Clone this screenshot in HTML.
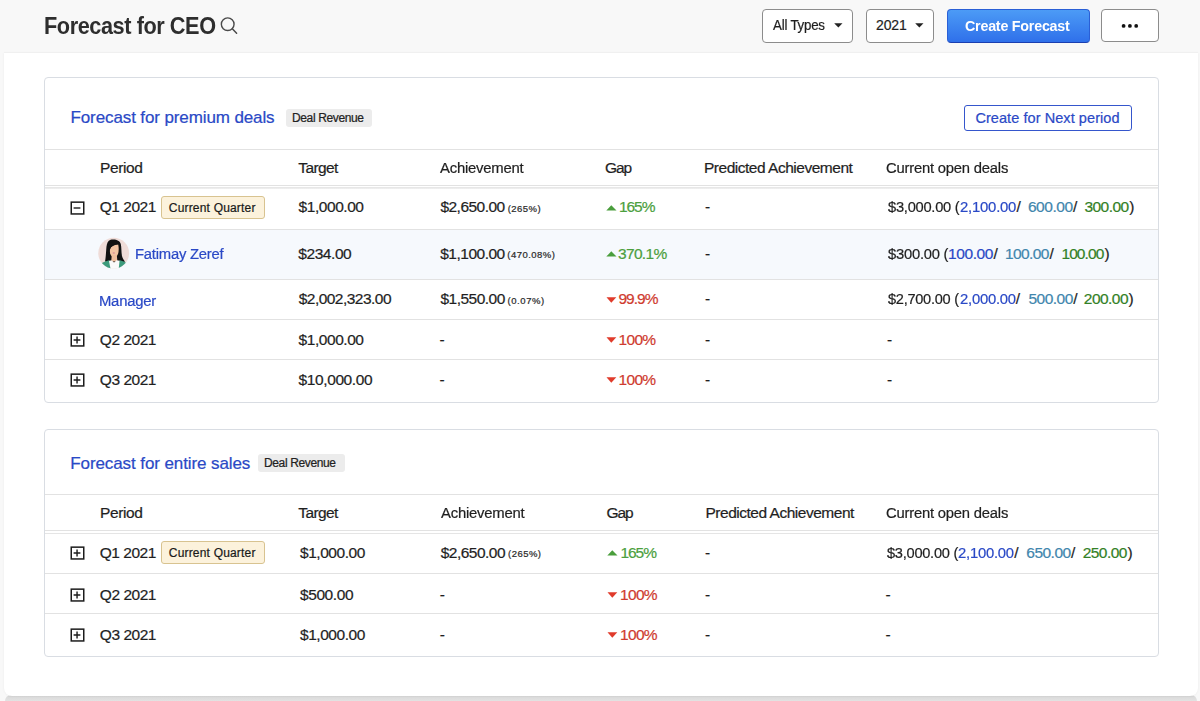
<!DOCTYPE html>
<html><head><meta charset="utf-8">
<style>
html,body{margin:0;padding:0;}
body{width:1200px;height:701px;overflow:hidden;position:relative;background:#f8f8f8;font-family:"Liberation Sans",sans-serif;}
.t{position:absolute;white-space:pre;font-family:"Liberation Sans",sans-serif;}
.panel{position:absolute;left:4px;top:53px;width:1194px;height:643px;background:#fff;border-radius:0 0 8px 8px;box-shadow:0 0 3px rgba(0,0,0,0.05);}
.band{position:absolute;left:5px;top:695px;width:1192px;height:6px;background:linear-gradient(#d0d0d0,#dcdcdc 40%,#e2e2e2);filter:blur(0.6px);border-radius:6px 6px 0 0;}
.card{position:absolute;left:44px;width:1113px;background:#fff;border:1px solid #d9dde3;border-radius:4px;}
.hl{position:absolute;left:45px;width:1113px;height:1px;background:#e2e2e2;}
.box{position:absolute;box-sizing:border-box;border:1px solid #8c8c8c;border-radius:4px;background:#fff;}
</style></head><body>
<div class="band"></div>
<div class="panel"></div>
<div style="position:absolute;left:4px;top:52px;width:1194px;height:1px;background:#f0f0f0"></div>
<svg style="position:absolute;left:218px;top:14px" width="22" height="22" viewBox="0 0 22 22"><circle cx="9.7" cy="10.2" r="6.35" stroke="#4a4a4a" stroke-width="1.4" fill="none"/><path d="M14.3 14.8 L18.6 19.2" stroke="#4a4a4a" stroke-width="1.5" stroke-linecap="round"/></svg>
<div class="box" style="left:762px;top:9px;width:91px;height:33.5px;"></div>
<svg style="position:absolute;left:833.5px;top:22.5px" width="9" height="5"><path d="M0.2 0.2 L8.5 0.2 L4.35 4.6Z" fill="#222"/></svg>
<div class="box" style="left:866px;top:9px;width:67.5px;height:33.5px;"></div>
<svg style="position:absolute;left:914.5px;top:22.5px" width="9" height="5"><path d="M0.2 0.2 L8.5 0.2 L4.35 4.6Z" fill="#222"/></svg>
<div style="position:absolute;left:946.5px;top:9px;width:143px;height:33.5px;box-sizing:border-box;border-radius:4px;background:linear-gradient(#4c9bf6,#2f70ea);border:1px solid #2a5fd6;border-bottom-color:#1a3fb0;"></div>
<div class="box" style="left:1101px;top:9px;width:57.5px;height:33px;"></div>
<svg style="position:absolute;left:1120px;top:22px" width="20" height="8"><circle cx="3.6" cy="3.9" r="1.9" fill="#111"/><circle cx="9.9" cy="3.9" r="1.9" fill="#111"/><circle cx="16.2" cy="3.9" r="1.9" fill="#111"/></svg>

<div class="card" style="top:76.5px;height:324.5px;"></div>
<div style="position:absolute;left:285.5px;top:108.5px;width:86px;height:18px;background:#ececec;border-radius:3px;"></div>
<div style="position:absolute;left:963.5px;top:104.5px;width:168px;height:26px;box-sizing:border-box;border:1px solid #3556cc;border-radius:3px;"></div>
<div class="hl" style="top:149px"></div>
<div class="hl" style="top:185px"></div>
<div class="hl" style="top:187px;height:2px;background:linear-gradient(#e4e4e4,#f1f1f1)"></div>
<div style="position:absolute;left:45px;top:230px;width:1113px;height:49px;background:#f6f9fd;"></div>
<div class="hl" style="top:229px"></div>
<div class="hl" style="top:279px"></div>
<div class="hl" style="top:319px"></div>
<div class="hl" style="top:359px"></div>
<div style="position:absolute;left:161px;top:196px;width:103.5px;height:22.5px;box-sizing:border-box;background:#fcf2dc;border:1px solid #d8c390;border-radius:3px;"></div>
<svg style="position:absolute;left:96px;top:235px" width="36" height="36" viewBox="0 0 36 36">
<defs><clipPath id="ac"><circle cx="17.7" cy="18.2" r="15.4"/></clipPath></defs>
<circle cx="17.7" cy="18.2" r="15.4" fill="#efdcd8"/>
<g clip-path="url(#ac)">
<path d="M16.8 4.5 C20.5 4.3 24 5.8 24.8 9 C25.6 12.5 25.2 17 26 21 C26.6 23.5 28 25 29 26.8 L22 27.5 L13 27.5 L9 26.6 C9.6 24 9.8 20 10.2 15 C10.5 10.5 11 7.2 12.8 5.8 C14 4.9 15.3 4.55 16.8 4.5Z" fill="#121212"/>
<path d="M14.6 12.5 C16 11 19.2 9.6 22.2 9.4 C22.9 12.5 22.9 16.5 22 19 C21 21.2 19.6 22.2 17.9 22.2 C16.1 22.2 14.6 20.6 14.1 18.2 C13.7 16.2 13.9 14 14.6 12.5Z" fill="#f2c4a2"/>
<path d="M12.5 8.5 C15.5 6.6 20 6.2 23.2 8.4 C22.8 9 21 9.3 19.5 9.6 C17 10.2 15 11.8 13.9 14.5Z" fill="#121212"/>
<path d="M15.8 20 L20.8 20 L21.4 26.5 L15.2 26.5Z" fill="#efbe9d"/>
<path d="M12.8 25.8 C14.5 25.5 15.5 25.3 16 25.5 L18 27.8 L20.5 25.3 C21.5 25.3 23 25.5 24.2 25.8 L24 36 L13 36Z" fill="#fafafa"/>
<path d="M2.5 36 L4.5 28.7 C7 27.2 10 26 12.8 25.2 L15 36Z" fill="#3c9b7c"/>
<path d="M23.6 25.2 C26 25.8 29 27 31.5 28.7 L33 36 L22.5 36Z" fill="#3c9b7c"/>
<ellipse cx="17.8" cy="18" rx="1.2" ry="0.65" fill="#d98f95"/>
</g></svg>

<div class="card" style="top:429px;height:226px;"></div>
<div style="position:absolute;left:257.5px;top:453.5px;width:87px;height:18px;background:#ececec;border-radius:3px;"></div>
<div class="hl" style="top:494px"></div>
<div class="hl" style="top:530px"></div>
<div class="hl" style="top:533px;background:#e5e5e5"></div>
<div class="hl" style="top:573px"></div>
<div class="hl" style="top:613px"></div>
<div style="position:absolute;left:161px;top:541px;width:103.5px;height:22.5px;box-sizing:border-box;background:#fcf2dc;border:1px solid #d8c390;border-radius:3px;"></div>

<!-- expand icons -->
<svg style="position:absolute;left:69.5px;top:200.5px" width="15" height="14"><rect x="1.25" y="1.15" width="12.5" height="11.8" fill="none" stroke="#1c1c1c" stroke-width="1.5"/><path d="M3.6 7 L10.4 7" stroke="#1c1c1c" stroke-width="1.4"/></svg>
<svg style="position:absolute;left:69.5px;top:333px" width="15" height="14"><rect x="1.25" y="1.15" width="12.5" height="11.8" fill="none" stroke="#1c1c1c" stroke-width="1.5"/><path d="M3.6 7 L10.4 7 M7.05 3.6 L7.05 10.4" stroke="#1c1c1c" stroke-width="1.4"/></svg>
<svg style="position:absolute;left:69.5px;top:373px" width="15" height="14"><rect x="1.25" y="1.15" width="12.5" height="11.8" fill="none" stroke="#1c1c1c" stroke-width="1.5"/><path d="M3.6 7 L10.4 7 M7.05 3.6 L7.05 10.4" stroke="#1c1c1c" stroke-width="1.4"/></svg>
<svg style="position:absolute;left:69.5px;top:545.5px" width="15" height="14"><rect x="1.25" y="1.15" width="12.5" height="11.8" fill="none" stroke="#1c1c1c" stroke-width="1.5"/><path d="M3.6 7 L10.4 7 M7.05 3.6 L7.05 10.4" stroke="#1c1c1c" stroke-width="1.4"/></svg>
<svg style="position:absolute;left:69.5px;top:588px" width="15" height="14"><rect x="1.25" y="1.15" width="12.5" height="11.8" fill="none" stroke="#1c1c1c" stroke-width="1.5"/><path d="M3.6 7 L10.4 7 M7.05 3.6 L7.05 10.4" stroke="#1c1c1c" stroke-width="1.4"/></svg>
<svg style="position:absolute;left:69.5px;top:628px" width="15" height="14"><rect x="1.25" y="1.15" width="12.5" height="11.8" fill="none" stroke="#1c1c1c" stroke-width="1.5"/><path d="M3.6 7 L10.4 7 M7.05 3.6 L7.05 10.4" stroke="#1c1c1c" stroke-width="1.4"/></svg>
<svg style="position:absolute;left:605.5px;top:205px" width="11" height="6"><path d="M0.3 5.6 L5.3 0.2 L10.5 5.6Z" fill="#4a9e3c"/></svg>
<svg style="position:absolute;left:605.5px;top:251.4px" width="11" height="6"><path d="M0.3 5.6 L5.3 0.2 L10.5 5.6Z" fill="#4a9e3c"/></svg>
<svg style="position:absolute;left:605.5px;top:296.6px" width="11" height="6"><path d="M0.5 0.2 L10.3 0.2 L5.3 5.8Z" fill="#e03b2b"/></svg>
<svg style="position:absolute;left:605.5px;top:337.0px" width="11" height="6"><path d="M0.5 0.2 L10.3 0.2 L5.3 5.8Z" fill="#e03b2b"/></svg>
<svg style="position:absolute;left:605.5px;top:377.0px" width="11" height="6"><path d="M0.5 0.2 L10.3 0.2 L5.3 5.8Z" fill="#e03b2b"/></svg>
<svg style="position:absolute;left:607px;top:550.3px" width="11" height="6"><path d="M0.3 5.6 L5.3 0.2 L10.5 5.6Z" fill="#4a9e3c"/></svg>
<svg style="position:absolute;left:607px;top:591.7px" width="11" height="6"><path d="M0.5 0.2 L10.3 0.2 L5.3 5.8Z" fill="#e03b2b"/></svg>
<svg style="position:absolute;left:607px;top:631.7px" width="11" height="6"><path d="M0.5 0.2 L10.3 0.2 L5.3 5.8Z" fill="#e03b2b"/></svg>
<span class="t" style="left:44.06px;top:14.75px;font-size:23px;line-height:23px;color:#2e2e2e;font-weight:700;letter-spacing:-0.453px;transform:scaleX(0.9434);transform-origin:0 0">Forecast for CEO</span>
<span class="t" style="left:773.20px;top:18.40px;font-size:14px;line-height:14px;color:#1f1f1f;-webkit-text-stroke:0.22px currentColor;letter-spacing:-0.225px;transform:scaleX(0.9502);transform-origin:0 0">All Types</span>
<span class="t" style="left:876.00px;top:18.40px;font-size:14px;line-height:14px;color:#1f1f1f;-webkit-text-stroke:0.22px currentColor;letter-spacing:-0.100px">2021</span>
<span class="t" style="left:965.05px;top:17.70px;font-size:15px;line-height:15px;color:#fff;font-weight:700;letter-spacing:-0.243px;transform:scaleX(0.9530);transform-origin:0 0">Create Forecast</span>
<span class="t" style="left:70.50px;top:109.20px;font-size:17px;line-height:17px;color:#2a49c6;-webkit-text-stroke:0.22px currentColor;letter-spacing:-0.112px">Forecast for premium deals</span>
<span class="t" style="left:292.00px;top:111.60px;font-size:12px;line-height:12px;color:#222;-webkit-text-stroke:0.22px currentColor;letter-spacing:-0.364px">Deal Revenue</span>
<span class="t" style="left:975.40px;top:110.70px;font-size:14.5px;line-height:14.5px;color:#2a49c6;-webkit-text-stroke:0.22px currentColor;letter-spacing:0.071px">Create for Next period</span>
<span class="t" style="left:100.00px;top:159.50px;font-size:15.5px;line-height:15.5px;color:#1f1f1f;-webkit-text-stroke:0.22px currentColor;letter-spacing:-0.400px">Period</span>
<span class="t" style="left:298.30px;top:159.50px;font-size:15.5px;line-height:15.5px;color:#1f1f1f;-webkit-text-stroke:0.22px currentColor;letter-spacing:-0.600px">Target</span>
<span class="t" style="left:440.00px;top:159.50px;font-size:15.5px;line-height:15.5px;color:#1f1f1f;-webkit-text-stroke:0.22px currentColor;letter-spacing:-0.240px;transform:scaleX(0.9589);transform-origin:0 0">Achievement</span>
<span class="t" style="left:605.00px;top:159.50px;font-size:15.5px;line-height:15.5px;color:#1f1f1f;-webkit-text-stroke:0.22px currentColor;letter-spacing:-1.150px">Gap</span>
<span class="t" style="left:704.00px;top:159.50px;font-size:15.5px;line-height:15.5px;color:#1f1f1f;-webkit-text-stroke:0.22px currentColor;letter-spacing:-0.485px">Predicted Achievement</span>
<span class="t" style="left:885.74px;top:159.50px;font-size:15.5px;line-height:15.5px;color:#1f1f1f;-webkit-text-stroke:0.22px currentColor;letter-spacing:-0.221px;transform:scaleX(0.9553);transform-origin:0 0">Current open deals</span>
<span class="t" style="left:99.80px;top:199.40px;font-size:15.5px;line-height:15.5px;color:#1f1f1f;-webkit-text-stroke:0.22px currentColor;letter-spacing:-0.483px">Q1 2021</span>
<span class="t" style="left:168.80px;top:201.50px;font-size:12px;line-height:12px;color:#1a1a1a;-webkit-text-stroke:0.22px currentColor;letter-spacing:0.186px">Current Quarter</span>
<span class="t" style="left:298.60px;top:199.40px;font-size:15.5px;line-height:15.5px;color:#1f1f1f;-webkit-text-stroke:0.22px currentColor;letter-spacing:-0.450px">$1,000.00</span>
<span class="t" style="left:440.40px;top:199.20px;font-size:15.5px;line-height:15.5px;color:#1f1f1f;-webkit-text-stroke:0.22px currentColor;letter-spacing:-0.513px">$2,650.00</span>
<span class="t" style="left:507.70px;top:203.80px;font-size:9.5px;line-height:9.5px;color:#2a2a2a;-webkit-text-stroke:0.22px currentColor;letter-spacing:0.480px">(265%)</span>
<span class="t" style="left:618.90px;top:199.40px;font-size:15.5px;line-height:15.5px;color:#4c9f3e;-webkit-text-stroke:0.22px currentColor;letter-spacing:-1.033px">165%</span>
<span class="t" style="left:705.00px;top:199.40px;font-size:15.5px;line-height:15.5px;color:#1f1f1f;-webkit-text-stroke:0.22px currentColor">-</span>
<span class="t" style="left:888.10px;top:199.40px;font-size:15.5px;line-height:15.5px;color:#1f1f1f;-webkit-text-stroke:0.22px currentColor;letter-spacing:-0.268px;transform:scaleX(0.9466);transform-origin:0 0">$3,000.00 (</span>
<span class="t" style="left:959.94px;top:199.40px;font-size:15.5px;line-height:15.5px;color:#2a49c6;-webkit-text-stroke:0.22px currentColor;letter-spacing:-0.223px;transform:scaleX(0.9593);transform-origin:0 0">2,100.00</span>
<span class="t" style="left:1016.40px;top:199.40px;font-size:15.5px;line-height:15.5px;color:#1f1f1f;-webkit-text-stroke:0.22px currentColor">/</span>
<span class="t" style="left:1027.90px;top:199.40px;font-size:15.5px;line-height:15.5px;color:#3f86ad;-webkit-text-stroke:0.22px currentColor;letter-spacing:-0.440px">600.00</span>
<span class="t" style="left:1073.10px;top:199.40px;font-size:15.5px;line-height:15.5px;color:#1f1f1f;-webkit-text-stroke:0.22px currentColor">/</span>
<span class="t" style="left:1084.50px;top:199.40px;font-size:15.5px;line-height:15.5px;color:#338126;-webkit-text-stroke:0.22px currentColor;letter-spacing:-0.560px">300.00</span>
<span class="t" style="left:1129.20px;top:199.40px;font-size:15.5px;line-height:15.5px;color:#1f1f1f;-webkit-text-stroke:0.22px currentColor">)</span>
<span class="t" style="left:134.64px;top:245.90px;font-size:15.5px;line-height:15.5px;color:#2a49c6;-webkit-text-stroke:0.22px currentColor;letter-spacing:-0.230px;transform:scaleX(0.9551);transform-origin:0 0">Fatimay Zeref</span>
<span class="t" style="left:298.30px;top:245.90px;font-size:15.5px;line-height:15.5px;color:#1f1f1f;-webkit-text-stroke:0.22px currentColor;letter-spacing:-0.433px">$234.00</span>
<span class="t" style="left:440.20px;top:245.90px;font-size:15.5px;line-height:15.5px;color:#1f1f1f;-webkit-text-stroke:0.22px currentColor;letter-spacing:-0.488px">$1,100.00</span>
<span class="t" style="left:507.30px;top:250.40px;font-size:9.5px;line-height:9.5px;color:#2a2a2a;-webkit-text-stroke:0.22px currentColor;letter-spacing:0.463px">(470.08%)</span>
<span class="t" style="left:618.00px;top:245.75px;font-size:15.5px;line-height:15.5px;color:#4c9f3e;-webkit-text-stroke:0.22px currentColor;letter-spacing:-0.680px">370.1%</span>
<span class="t" style="left:705.00px;top:245.90px;font-size:15.5px;line-height:15.5px;color:#1f1f1f;-webkit-text-stroke:0.22px currentColor">-</span>
<span class="t" style="left:888.00px;top:245.90px;font-size:15.5px;line-height:15.5px;color:#1f1f1f;-webkit-text-stroke:0.22px currentColor;letter-spacing:-0.250px;transform:scaleX(0.9524);transform-origin:0 0">$300.00 (</span>
<span class="t" style="left:948.00px;top:245.90px;font-size:15.5px;line-height:15.5px;color:#2a49c6;-webkit-text-stroke:0.22px currentColor;letter-spacing:-0.400px">100.00</span>
<span class="t" style="left:993.40px;top:245.90px;font-size:15.5px;line-height:15.5px;color:#1f1f1f;-webkit-text-stroke:0.22px currentColor">/</span>
<span class="t" style="left:1005.00px;top:245.90px;font-size:15.5px;line-height:15.5px;color:#3f86ad;-webkit-text-stroke:0.22px currentColor;letter-spacing:-0.600px">100.00</span>
<span class="t" style="left:1049.40px;top:245.90px;font-size:15.5px;line-height:15.5px;color:#1f1f1f;-webkit-text-stroke:0.22px currentColor">/</span>
<span class="t" style="left:1061.40px;top:245.90px;font-size:15.5px;line-height:15.5px;color:#338126;-webkit-text-stroke:0.22px currentColor;letter-spacing:-0.880px">100.00</span>
<span class="t" style="left:1104.50px;top:245.90px;font-size:15.5px;line-height:15.5px;color:#1f1f1f;-webkit-text-stroke:0.22px currentColor">)</span>
<span class="t" style="left:98.84px;top:292.70px;font-size:15.5px;line-height:15.5px;color:#2a49c6;-webkit-text-stroke:0.22px currentColor;letter-spacing:-0.267px;transform:scaleX(0.9589);transform-origin:0 0">Manager</span>
<span class="t" style="left:298.70px;top:290.80px;font-size:15.5px;line-height:15.5px;color:#1f1f1f;-webkit-text-stroke:0.22px currentColor;letter-spacing:-0.525px">$2,002,323.00</span>
<span class="t" style="left:440.40px;top:291.00px;font-size:15.5px;line-height:15.5px;color:#1f1f1f;-webkit-text-stroke:0.22px currentColor;letter-spacing:-0.500px">$1,550.00</span>
<span class="t" style="left:507.50px;top:295.60px;font-size:9.5px;line-height:9.5px;color:#2a2a2a;-webkit-text-stroke:0.22px currentColor;letter-spacing:0.583px">(0.07%)</span>
<span class="t" style="left:618.50px;top:291.00px;font-size:15.5px;line-height:15.5px;color:#cf3b2f;-webkit-text-stroke:0.22px currentColor;letter-spacing:-1.000px">99.9%</span>
<span class="t" style="left:705.00px;top:291.00px;font-size:15.5px;line-height:15.5px;color:#1f1f1f;-webkit-text-stroke:0.22px currentColor">-</span>
<span class="t" style="left:888.20px;top:291.00px;font-size:15.5px;line-height:15.5px;color:#1f1f1f;-webkit-text-stroke:0.22px currentColor;letter-spacing:-0.296px;transform:scaleX(0.9408);transform-origin:0 0">$2,700.00 (</span>
<span class="t" style="left:959.64px;top:291.00px;font-size:15.5px;line-height:15.5px;color:#2a49c6;-webkit-text-stroke:0.22px currentColor;letter-spacing:-0.240px;transform:scaleX(0.9560);transform-origin:0 0">2,000.00</span>
<span class="t" style="left:1015.80px;top:291.00px;font-size:15.5px;line-height:15.5px;color:#1f1f1f;-webkit-text-stroke:0.22px currentColor">/</span>
<span class="t" style="left:1028.50px;top:291.00px;font-size:15.5px;line-height:15.5px;color:#3f86ad;-webkit-text-stroke:0.22px currentColor;letter-spacing:-0.520px">500.00</span>
<span class="t" style="left:1073.30px;top:291.00px;font-size:15.5px;line-height:15.5px;color:#1f1f1f;-webkit-text-stroke:0.22px currentColor">/</span>
<span class="t" style="left:1083.80px;top:291.00px;font-size:15.5px;line-height:15.5px;color:#338126;-webkit-text-stroke:0.22px currentColor;letter-spacing:-0.540px">200.00</span>
<span class="t" style="left:1128.60px;top:291.00px;font-size:15.5px;line-height:15.5px;color:#1f1f1f;-webkit-text-stroke:0.22px currentColor">)</span>
<span class="t" style="left:99.80px;top:332.00px;font-size:15.5px;line-height:15.5px;color:#1f1f1f;-webkit-text-stroke:0.22px currentColor;letter-spacing:-0.467px">Q2 2021</span>
<span class="t" style="left:298.60px;top:332.00px;font-size:15.5px;line-height:15.5px;color:#1f1f1f;-webkit-text-stroke:0.22px currentColor;letter-spacing:-0.450px">$1,000.00</span>
<span class="t" style="left:439.50px;top:332.00px;font-size:15.5px;line-height:15.5px;color:#1f1f1f;-webkit-text-stroke:0.22px currentColor">-</span>
<span class="t" style="left:618.50px;top:332.00px;font-size:15.5px;line-height:15.5px;color:#cf3b2f;-webkit-text-stroke:0.22px currentColor;letter-spacing:-0.667px">100%</span>
<span class="t" style="left:705.00px;top:332.00px;font-size:15.5px;line-height:15.5px;color:#1f1f1f;-webkit-text-stroke:0.22px currentColor">-</span>
<span class="t" style="left:887.00px;top:332.00px;font-size:15.5px;line-height:15.5px;color:#1f1f1f;-webkit-text-stroke:0.22px currentColor">-</span>
<span class="t" style="left:99.80px;top:372.00px;font-size:15.5px;line-height:15.5px;color:#1f1f1f;-webkit-text-stroke:0.22px currentColor;letter-spacing:-0.467px">Q3 2021</span>
<span class="t" style="left:298.60px;top:372.00px;font-size:15.5px;line-height:15.5px;color:#1f1f1f;-webkit-text-stroke:0.22px currentColor;letter-spacing:-0.400px">$10,000.00</span>
<span class="t" style="left:439.50px;top:372.00px;font-size:15.5px;line-height:15.5px;color:#1f1f1f;-webkit-text-stroke:0.22px currentColor">-</span>
<span class="t" style="left:618.50px;top:372.00px;font-size:15.5px;line-height:15.5px;color:#cf3b2f;-webkit-text-stroke:0.22px currentColor;letter-spacing:-0.667px">100%</span>
<span class="t" style="left:705.00px;top:372.00px;font-size:15.5px;line-height:15.5px;color:#1f1f1f;-webkit-text-stroke:0.22px currentColor">-</span>
<span class="t" style="left:887.00px;top:372.00px;font-size:15.5px;line-height:15.5px;color:#1f1f1f;-webkit-text-stroke:0.22px currentColor">-</span>
<span class="t" style="left:70.25px;top:454.75px;font-size:17px;line-height:17px;color:#2a49c6;-webkit-text-stroke:0.22px currentColor;letter-spacing:-0.094px">Forecast for entire sales</span>
<span class="t" style="left:264.00px;top:457.10px;font-size:12px;line-height:12px;color:#222;-webkit-text-stroke:0.22px currentColor;letter-spacing:-0.364px">Deal Revenue</span>
<span class="t" style="left:100.00px;top:504.80px;font-size:15.5px;line-height:15.5px;color:#1f1f1f;-webkit-text-stroke:0.22px currentColor;letter-spacing:-0.400px">Period</span>
<span class="t" style="left:298.30px;top:504.80px;font-size:15.5px;line-height:15.5px;color:#1f1f1f;-webkit-text-stroke:0.22px currentColor;letter-spacing:-0.600px">Target</span>
<span class="t" style="left:440.50px;top:504.80px;font-size:15.5px;line-height:15.5px;color:#1f1f1f;-webkit-text-stroke:0.22px currentColor;letter-spacing:-0.240px;transform:scaleX(0.9589);transform-origin:0 0">Achievement</span>
<span class="t" style="left:606.50px;top:504.80px;font-size:15.5px;line-height:15.5px;color:#1f1f1f;-webkit-text-stroke:0.22px currentColor;letter-spacing:-1.150px">Gap</span>
<span class="t" style="left:705.50px;top:504.80px;font-size:15.5px;line-height:15.5px;color:#1f1f1f;-webkit-text-stroke:0.22px currentColor;letter-spacing:-0.485px">Predicted Achievement</span>
<span class="t" style="left:885.74px;top:504.80px;font-size:15.5px;line-height:15.5px;color:#1f1f1f;-webkit-text-stroke:0.22px currentColor;letter-spacing:-0.221px;transform:scaleX(0.9553);transform-origin:0 0">Current open deals</span>
<span class="t" style="left:99.80px;top:544.70px;font-size:15.5px;line-height:15.5px;color:#1f1f1f;-webkit-text-stroke:0.22px currentColor;letter-spacing:-0.483px">Q1 2021</span>
<span class="t" style="left:168.80px;top:546.80px;font-size:12px;line-height:12px;color:#1a1a1a;-webkit-text-stroke:0.22px currentColor;letter-spacing:0.186px">Current Quarter</span>
<span class="t" style="left:300.00px;top:544.70px;font-size:15.5px;line-height:15.5px;color:#1f1f1f;-webkit-text-stroke:0.22px currentColor;letter-spacing:-0.450px">$1,000.00</span>
<span class="t" style="left:440.70px;top:544.50px;font-size:15.5px;line-height:15.5px;color:#1f1f1f;-webkit-text-stroke:0.22px currentColor;letter-spacing:-0.513px">$2,650.00</span>
<span class="t" style="left:508.00px;top:549.10px;font-size:9.5px;line-height:9.5px;color:#2a2a2a;-webkit-text-stroke:0.22px currentColor;letter-spacing:0.480px">(265%)</span>
<span class="t" style="left:620.40px;top:544.70px;font-size:15.5px;line-height:15.5px;color:#4c9f3e;-webkit-text-stroke:0.22px currentColor;letter-spacing:-1.033px">165%</span>
<span class="t" style="left:705.00px;top:544.70px;font-size:15.5px;line-height:15.5px;color:#1f1f1f;-webkit-text-stroke:0.22px currentColor">-</span>
<span class="t" style="left:886.90px;top:544.70px;font-size:15.5px;line-height:15.5px;color:#1f1f1f;-webkit-text-stroke:0.22px currentColor;letter-spacing:-0.284px;transform:scaleX(0.9433);transform-origin:0 0">$3,000.00 (</span>
<span class="t" style="left:958.14px;top:544.70px;font-size:15.5px;line-height:15.5px;color:#2a49c6;-webkit-text-stroke:0.22px currentColor;letter-spacing:-0.240px;transform:scaleX(0.9560);transform-origin:0 0">2,100.00</span>
<span class="t" style="left:1014.30px;top:544.70px;font-size:15.5px;line-height:15.5px;color:#1f1f1f;-webkit-text-stroke:0.22px currentColor">/</span>
<span class="t" style="left:1026.30px;top:544.70px;font-size:15.5px;line-height:15.5px;color:#3f86ad;-webkit-text-stroke:0.22px currentColor;letter-spacing:-0.520px">650.00</span>
<span class="t" style="left:1071.10px;top:544.70px;font-size:15.5px;line-height:15.5px;color:#1f1f1f;-webkit-text-stroke:0.22px currentColor">/</span>
<span class="t" style="left:1082.70px;top:544.70px;font-size:15.5px;line-height:15.5px;color:#338126;-webkit-text-stroke:0.22px currentColor;letter-spacing:-0.540px">250.00</span>
<span class="t" style="left:1127.50px;top:544.70px;font-size:15.5px;line-height:15.5px;color:#1f1f1f;-webkit-text-stroke:0.22px currentColor">)</span>
<span class="t" style="left:99.80px;top:586.70px;font-size:15.5px;line-height:15.5px;color:#1f1f1f;-webkit-text-stroke:0.22px currentColor;letter-spacing:-0.467px">Q2 2021</span>
<span class="t" style="left:300.00px;top:586.70px;font-size:15.5px;line-height:15.5px;color:#1f1f1f;-webkit-text-stroke:0.22px currentColor;letter-spacing:-0.417px">$500.00</span>
<span class="t" style="left:439.70px;top:586.70px;font-size:15.5px;line-height:15.5px;color:#1f1f1f;-webkit-text-stroke:0.22px currentColor">-</span>
<span class="t" style="left:620.00px;top:586.70px;font-size:15.5px;line-height:15.5px;color:#cf3b2f;-webkit-text-stroke:0.22px currentColor;letter-spacing:-0.667px">100%</span>
<span class="t" style="left:705.00px;top:586.70px;font-size:15.5px;line-height:15.5px;color:#1f1f1f;-webkit-text-stroke:0.22px currentColor">-</span>
<span class="t" style="left:885.50px;top:586.70px;font-size:15.5px;line-height:15.5px;color:#1f1f1f;-webkit-text-stroke:0.22px currentColor">-</span>
<span class="t" style="left:99.80px;top:626.70px;font-size:15.5px;line-height:15.5px;color:#1f1f1f;-webkit-text-stroke:0.22px currentColor;letter-spacing:-0.467px">Q3 2021</span>
<span class="t" style="left:300.00px;top:626.70px;font-size:15.5px;line-height:15.5px;color:#1f1f1f;-webkit-text-stroke:0.22px currentColor;letter-spacing:-0.450px">$1,000.00</span>
<span class="t" style="left:439.70px;top:626.70px;font-size:15.5px;line-height:15.5px;color:#1f1f1f;-webkit-text-stroke:0.22px currentColor">-</span>
<span class="t" style="left:620.00px;top:626.70px;font-size:15.5px;line-height:15.5px;color:#cf3b2f;-webkit-text-stroke:0.22px currentColor;letter-spacing:-0.667px">100%</span>
<span class="t" style="left:705.00px;top:626.70px;font-size:15.5px;line-height:15.5px;color:#1f1f1f;-webkit-text-stroke:0.22px currentColor">-</span>
<span class="t" style="left:885.50px;top:626.70px;font-size:15.5px;line-height:15.5px;color:#1f1f1f;-webkit-text-stroke:0.22px currentColor">-</span>
</body></html>
